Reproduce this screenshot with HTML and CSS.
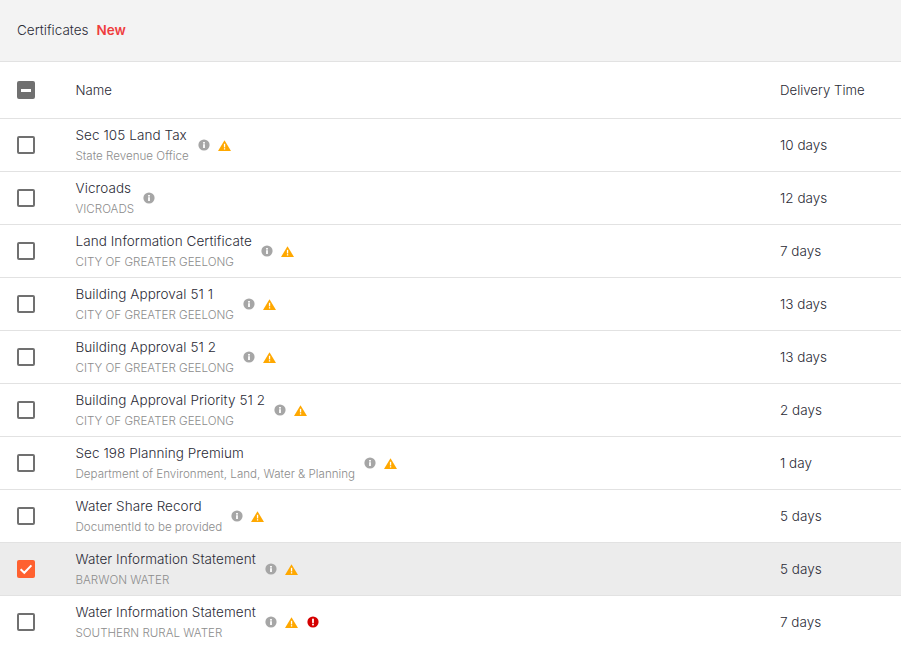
FILE: index.html
```html
<!DOCTYPE html>
<html lang="en">
<head>
<meta charset="utf-8">
<title>Certificates</title>
<link rel="stylesheet" href="styles.css">
</head>
<body>
<svg class="defs" width="0" height="0" aria-hidden="true">
  <symbol id="info" viewBox="0 0 12 12"><circle cx="6" cy="6" r="5.6" fill="#a6a6a6"/><rect x="5.1" y="5.2" width="1.8" height="3.8" fill="#fff"/><rect x="5.1" y="3" width="1.8" height="1.6" fill="#fff"/></symbol>
  <symbol id="warn" viewBox="0 0 13 11"><path d="M6.5 0.2 13 11H0Z" fill="#ffa800"/><rect x="5.9" y="3.8" width="1.3" height="3.6" fill="#fff"/><rect x="5.9" y="8.2" width="1.3" height="1.3" fill="#fff"/></symbol>
  <symbol id="err" viewBox="0 0 12 12"><circle cx="6" cy="6" r="5.6" fill="#d50000"/><rect x="5.1" y="2.7" width="1.8" height="4.2" fill="#fff"/><rect x="5.1" y="7.7" width="1.8" height="1.7" fill="#fff"/></symbol>
</svg>
<header class="title"><span>Certificates</span><strong class="new">New</strong></header>
<div class="row head">
  <div class="check-cell"><span class="box mixed"><i></i></span></div>
  <div class="name">Name</div>
  <div class="time">Delivery Time</div>
</div>
<div class="row">
  <div class="check-cell"><span class="box"></span></div>
  <div class="main"><div class="text"><div class="t">Sec 105 Land Tax</div><div class="s">State Revenue Office</div></div><svg class="i-info"><use href="#info"/></svg><svg class="i-warn"><use href="#warn"/></svg></div>
  <div class="time">10 days</div>
</div>
<div class="row">
  <div class="check-cell"><span class="box"></span></div>
  <div class="main"><div class="text"><div class="t">Vicroads</div><div class="s">VICROADS</div></div><svg class="i-info"><use href="#info"/></svg></div>
  <div class="time">12 days</div>
</div>
<div class="row">
  <div class="check-cell"><span class="box"></span></div>
  <div class="main"><div class="text"><div class="t">Land Information Certificate</div><div class="s">CITY OF GREATER GEELONG</div></div><svg class="i-info"><use href="#info"/></svg><svg class="i-warn"><use href="#warn"/></svg></div>
  <div class="time">7 days</div>
</div>
<div class="row">
  <div class="check-cell"><span class="box"></span></div>
  <div class="main"><div class="text"><div class="t">Building Approval 51 1</div><div class="s">CITY OF GREATER GEELONG</div></div><svg class="i-info"><use href="#info"/></svg><svg class="i-warn"><use href="#warn"/></svg></div>
  <div class="time">13 days</div>
</div>
<div class="row">
  <div class="check-cell"><span class="box"></span></div>
  <div class="main"><div class="text"><div class="t">Building Approval 51 2</div><div class="s">CITY OF GREATER GEELONG</div></div><svg class="i-info"><use href="#info"/></svg><svg class="i-warn"><use href="#warn"/></svg></div>
  <div class="time">13 days</div>
</div>
<div class="row">
  <div class="check-cell"><span class="box"></span></div>
  <div class="main"><div class="text"><div class="t">Building Approval Priority 51 2</div><div class="s">CITY OF GREATER GEELONG</div></div><svg class="i-info"><use href="#info"/></svg><svg class="i-warn"><use href="#warn"/></svg></div>
  <div class="time">2 days</div>
</div>
<div class="row">
  <div class="check-cell"><span class="box"></span></div>
  <div class="main"><div class="text"><div class="t">Sec 198 Planning Premium</div><div class="s">Department of Environment, Land, Water &amp; Planning</div></div><svg class="i-info"><use href="#info"/></svg><svg class="i-warn"><use href="#warn"/></svg></div>
  <div class="time">1 day</div>
</div>
<div class="row">
  <div class="check-cell"><span class="box"></span></div>
  <div class="main"><div class="text"><div class="t">Water Share Record</div><div class="s">DocumentId to be provided</div></div><svg class="i-info"><use href="#info"/></svg><svg class="i-warn"><use href="#warn"/></svg></div>
  <div class="time">5 days</div>
</div>
<div class="row selected">
  <div class="check-cell"><span class="box checked"><svg viewBox="0 0 18 18" width="18" height="18"><path d="M3.6 9.2 7.3 12.8 14.4 5.4" fill="none" stroke="#fff" stroke-width="2"/></svg></span></div>
  <div class="main"><div class="text"><div class="t">Water Information Statement</div><div class="s">BARWON WATER</div></div><svg class="i-info"><use href="#info"/></svg><svg class="i-warn"><use href="#warn"/></svg></div>
  <div class="time">5 days</div>
</div>
<div class="row">
  <div class="check-cell"><span class="box"></span></div>
  <div class="main"><div class="text"><div class="t">Water Information Statement</div><div class="s">SOUTHERN RURAL WATER</div></div><svg class="i-info"><use href="#info"/></svg><svg class="i-warn"><use href="#warn"/></svg><svg class="i-err"><use href="#err"/></svg></div>
  <div class="time">7 days</div>
</div>
</body>
</html>
```
FILE: styles.css
```css
* { box-sizing: border-box; }
html, body { margin: 0; padding: 0; }
body {
  width: 901px;
  height: 646px;
  overflow: hidden;
  background: #fff;
  color: #2b2b36;
  font-family: Inter, "Liberation Sans", sans-serif;
  font-size: 13.5px;
  font-weight: 300;
}
.defs { display: block; height: 0; }
.title {
  height: 62px;
  display: flex;
  align-items: center;
  gap: 8px;
  padding-left: 17px;
  padding-bottom: 2px;
  background: #f3f3f3;
  border-bottom: 1px solid #e2e2e2;
}
.new { color: #ef3d3d; font-weight: 600; }
.row {
  height: 53px;
  display: flex;
  align-items: center;
  border-bottom: 1px solid #e2e2e2;
}
.row.head { height: 57px; font-size: 13.2px; }
.row.selected { background: #ececec; }
.check-cell { width: 75.5px; padding-left: 17px; flex: none; display: flex; }
.box {
  width: 18px;
  height: 18px;
  border: 2px solid #707070;
  border-radius: 2px;
  background: #fff;
  display: block;
}
.box.mixed { background: #707070; display: flex; align-items: center; justify-content: center; }
.box.mixed i { display: block; width: 10px; height: 3px; background: #fff; }
.box.checked { background: #ff6130; border: 0; }
.box.checked svg { display: block; }
.name, .main { flex: none; width: 704.5px; }
.main { display: flex; align-items: center; }
.text { display: flex; flex-direction: column; gap: 6px; }
.t { line-height: 16px; margin-top: -1px; letter-spacing: 0.07px; }
.s { font-size: 11.6px; line-height: 14px; color: #8c8c8c; margin-bottom: -1px; }
svg.i-info { width: 12px; height: 12px; margin-left: 9px; flex: none; }
svg.i-warn { width: 13px; height: 11px; margin-left: 8px; flex: none; }
svg.i-err { width: 12px; height: 12px; margin-left: 9px; flex: none; }
```
